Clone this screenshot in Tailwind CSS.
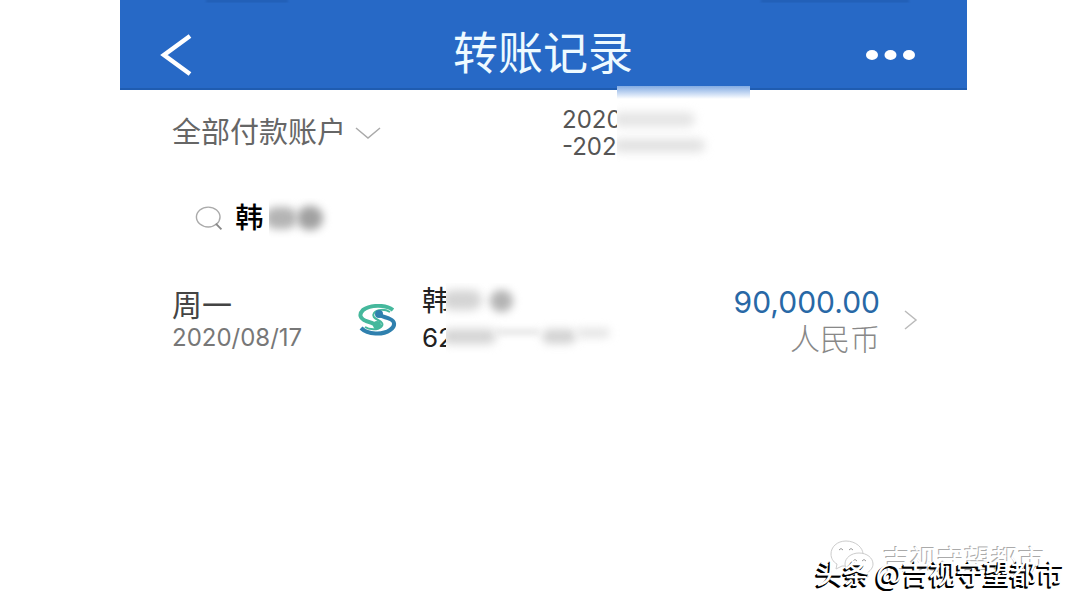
<!DOCTYPE html>
<html lang="zh-CN">
<head>
<meta charset="utf-8">
<meta name="viewport" content="width=device-width, initial-scale=1">
<title>转账记录</title>
<script src="https://cdn.jsdelivr.net/npm/@tailwindcss/browser@4"></script>
</head>
<body class="relative min-h-screen overflow-hidden bg-white font-['Inter','Noto_Sans_CJK_SC',sans-serif] text-[#555]">
<div class="ml-[120px] mr-[113px]">
  <header class="relative flex h-[90px] items-center justify-between border-b-2 border-[#1f5cb0] bg-[#2769c6] pt-5 pl-10 pr-[49px]">
    <div class="absolute inset-x-0 top-0 flex h-[3px] justify-between overflow-hidden pl-[86px] pr-[58px]" aria-hidden="true">
      <span class="h-[2px] w-[82px] bg-[#174b9a]/50 blur-[1px]"></span>
      <span class="h-[2px] w-[148px] bg-[#174b9a]/50 blur-[1px]"></span>
    </div>
    <button type="button" aria-label="返回" class="flex w-[60px]">
      <svg class="h-[44px] w-[34px]" viewBox="0 0 34 44" fill="none" stroke="#fff" stroke-width="4.500" stroke-linejoin="miter"><path d="M30 4 4 23 30 42"/></svg>
    </button>
    <h1 class="text-[45px] leading-[52px] text-[#eefaff]">转账记录</h1>
    <button type="button" aria-label="更多" class="flex">
      <svg class="h-[12px] w-[52px]" viewBox="0 0 52 12" fill="#fff"><ellipse cx="6" cy="7" rx="6" ry="5"/><ellipse cx="24.500" cy="7" rx="6" ry="5"/><ellipse cx="43" cy="7" rx="6" ry="5"/></svg>
    </button>
  </header>

  <main class="pl-[52px] pr-[49px]">
    <section class="flex pt-4">
      <label class="flex h-[54px] w-[390px] items-center gap-2">
        <select aria-label="付款账户" class="appearance-none bg-transparent text-[29px] leading-[36px] text-[#666]"><option>全部付款账户</option></select>
        <svg class="h-[14px] w-[26px]" viewBox="0 0 26 14" fill="none" stroke="#aaa" stroke-width="1.500"><path d="M1 2 13 12 25 2"/></svg>
      </label>
      <button type="button" aria-label="日期范围" class="relative h-[54px] text-left text-[24px] leading-[27px] text-[#555]">
        <span class="block">2020</span>
        <span class="block">-2020</span>
        <span class="absolute -top-5 left-[55px] h-[76px] w-[133px] overflow-hidden bg-white" aria-hidden="true">
          <span class="block h-[13px] bg-linear-to-b from-[#83abe2] to-white"></span>
          <span class="absolute top-[26px] -left-1 h-[15px] w-[82px] rounded-full bg-neutral-300/60 blur-[5px]"></span>
          <span class="absolute top-[53px] -left-1 h-[13px] w-[92px] rounded-full bg-neutral-300/70 blur-[5px]"></span>
        </span>
      </button>
    </section>

    <label class="relative mt-[38px] flex h-10 items-center pl-[23px]">
      <svg class="h-[28px] w-[30px]" viewBox="0 0 30 28" fill="none" stroke="#aaa" stroke-width="1.500"><ellipse cx="14" cy="13" rx="12.500" ry="10.500"/><path d="M22 20 28 26" stroke="#888" stroke-width="2"/></svg>
      <input type="text" aria-label="搜索" value="韩" class="ml-3 w-full min-w-0 bg-transparent text-[28px] leading-[36px] font-medium text-black outline-none">
      <span class="absolute top-0 left-[97px] h-10 w-[70px] overflow-hidden" aria-hidden="true">
        <span class="absolute top-[9px] -left-1 h-[22px] w-[32px] rounded-full bg-neutral-400/80 blur-[4px]"></span>
        <span class="absolute top-[8px] left-[28px] h-[24px] w-[26px] rounded-full bg-neutral-400 blur-[4px]"></span>
      </span>
    </label>

    <a href="#detail" class="mt-[45px] flex items-center">
      <div class="w-[186px]">
        <p class="text-[30px] leading-[36px] text-[#444]">周一</p>
        <time datetime="2020-08-17" class="block text-[24px] leading-[30px] text-[#777]">2020/08/17</time>
      </div>
      <svg class="h-[32px] w-[40px]" viewBox="0 0 40 32" fill="none">
        <path d="M35 6C27 0 12 1 5 6c-5 5-2 9 3 11 4 1 7 2 10 4" stroke="#45b89c" stroke-width="4"/>
        <path d="M3 24c7 7 22 7 29 2 6-4 5-9 0-11-4-2-8-2-12-5" stroke="#2f80ae" stroke-width="4"/>
        <path d="M32 8c-5-3-13-3-16 1-2 3 0 5 4 7s6 4 3 7-12 3-16 0" stroke="#45b89c" stroke-width="2"/>
        <ellipse cx="21" cy="10" rx="4" ry="4" fill="#2f80ae"/><ellipse cx="19" cy="21" rx="4" ry="4" fill="#45b89c"/>
      </svg>
      <div class="relative ml-6 w-[200px] text-[#222]">
        <p class="text-[28px] leading-[36px]">韩</p>
        <p class="text-[26px] leading-[38px]">62</p>
        <span class="absolute inset-y-0 left-6 w-[180px] overflow-hidden bg-white" aria-hidden="true">
          <span class="absolute top-[7px] -left-1 h-[20px] w-[40px] rounded-full bg-neutral-300 blur-[5px]"></span>
          <span class="absolute top-[7px] left-[44px] h-[22px] w-[23px] rounded-full bg-neutral-400/80 blur-[4px]"></span>
          <span class="absolute top-[46px] -left-1 h-[15px] w-[54px] rounded-full bg-neutral-300 blur-[5px]"></span>
          <span class="absolute top-[46px] left-[48px] h-[6px] w-[46px] rounded-full bg-neutral-200 blur-[3px]"></span>
          <span class="absolute top-[46px] left-[96px] h-[15px] w-[34px] rounded-full bg-neutral-300 blur-[4px]"></span>
          <span class="absolute top-[45px] left-[130px] h-[10px] w-[34px] rounded-full bg-neutral-200 blur-[4px]"></span>
        </span>
      </div>
      <div class="ml-auto text-right">
        <p class="text-[30px] leading-[38px] text-[#2868a6]">90,000.00</p>
        <p class="text-[30px] leading-[36px] font-light text-[#888]">人民币</p>
      </div>
      <svg class="ml-6 h-[22px] w-[14px]" viewBox="0 0 14 22" fill="none" stroke="#bbb" stroke-width="1.500"><path d="M1 2 12 11 1 20"/></svg>
    </a>
  </main>
</div>

<aside class="absolute right-4 bottom-[17px] whitespace-nowrap font-['Noto_Sans_CJK_SC',sans-serif] text-white">
  <div class="absolute right-[19px] bottom-[12px] flex items-center gap-2 text-[27px] leading-[40px] [text-shadow:-1px_-1px_0_#aaa]">
    <svg class="h-[38px] w-[46px]" viewBox="0 0 46 38" fill="#fff" stroke="#ccc" stroke-width="1"><path d="M17 1C8 1 2 7 2 14c0 4 2 8 6 10l-1 5 6-3h5C31 26 34 20 34 14S27 1 17 1Z"/><path d="M30 13c-8 0-14 5-14 11s6 11 14 11h4l5 2-1-4c3-2 6-5 6-9 0-6-6-11-14-11Z"/><g stroke="#999" fill="none"><path d="M10 10q2-3 4 0M20 10q2-3 4 0M24 21q2-3 4 0M33 21q2-3 4 0"/></g></svg>
    <span>吉视守望都市</span>
  </div>
  <p class="relative text-[27px] leading-[36px] font-medium [text-shadow:-1px_1px_0_#000,-2px_2px_0_#000,-1px_2px_0_#000]">头条 @吉视守望都市</p>
</aside>
</body>
</html>
